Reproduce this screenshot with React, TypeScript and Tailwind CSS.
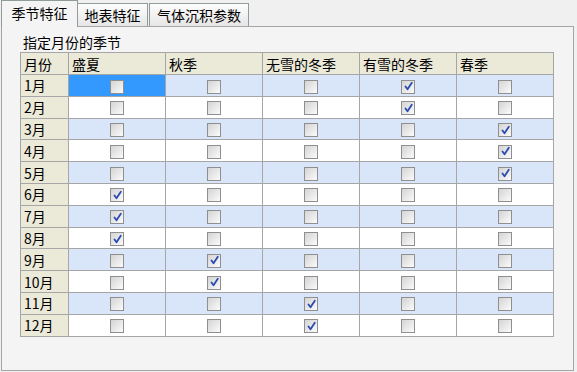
import React from 'react';

const seasons = ['盛夏', '秋季', '无雪的冬季', '有雪的冬季', '春季'];

// index of the checked season for each month
const checked = [3, 3, 4, 4, 4, 0, 0, 0, 1, 1, 2, 2];

const font = { fontFamily: '"Noto Sans CJK SC", "Noto Sans", sans-serif' };

function CheckBox({ on }: { on: boolean }) {
  return (
    <span className="inline-flex size-[14px] items-center justify-center border border-[#8f8f8f] bg-gradient-to-br from-[#d4d4d4] to-[#fbfbfb] align-middle">
      {on && (
        <svg width="11" height="11" viewBox="0 0 11 11">
          <path d="M2.5 5.5 L4.5 8.3 L8.8 1.8" fill="none" stroke="#2b4bb0" strokeWidth="1.8" strokeLinecap="round" strokeLinejoin="round" />
        </svg>
      )}
    </span>
  );
}

export default function App() {
  return (
    <div className="w-[577px] h-[372px] bg-[#f0f0f0] text-[14px] text-black" style={font}>
      <div className="flex items-end h-[26px] pl-[1px] relative z-10">
        <div className="w-[77px] border border-b-0 border-[#919b9c] bg-[#f4f4f4] flex items-center justify-center leading-none pb-[2px] -mb-[1px] h-[27px]">
          季节特征
        </div>
        <div className="h-[23px] w-[70px] border border-l-0 border-b-0 border-[#919b9c] bg-gradient-to-b from-[#fdfdfd] to-[#e6e6e6] flex items-center justify-center leading-none">
          地表特征
        </div>
        <div className="h-[23px] w-[100px] ml-[1px] border border-b-0 border-[#919b9c] bg-gradient-to-b from-[#fdfdfd] to-[#e6e6e6] flex items-center justify-center leading-none">
          气体沉积参数
        </div>
      </div>
      <div className="ml-[1px] w-[573px] h-[345px] border border-[#a5a5a5] bg-[#f4f4f4] pl-[18px] pt-[6px]">
        <div className="leading-[19px] pl-[3px]">指定月份的季节</div>
        <table className="table-fixed border-collapse w-[533px] leading-none">
          <colgroup>
            <col className="w-[48px]" />
            {seasons.map((s) => (
              <col key={s} className="w-[97px]" />
            ))}
          </colgroup>
          <thead>
            <tr className="h-[22px] bg-[#ebe9d8]">
              <th className="border border-[#a6a6a6] px-[3px] text-left font-normal">月份</th>
              {seasons.map((s) => (
                <th key={s} className="border border-[#a6a6a6] px-[3px] text-left font-normal">
                  {s}
                </th>
              ))}
            </tr>
          </thead>
          <tbody>
            {checked.map((c, i) => (
              <tr key={i} className={`h-[21.8px] ${i % 2 === 0 ? 'bg-[#d9e5f8]' : 'bg-white'}`}>
                <td className="border border-[#a6a6a6] bg-[#ebe9d8] px-[3px]">{i + 1}月</td>
                {seasons.map((s, j) => (
                  <td
                    key={s}
                    className={`border border-[#a6a6a6] text-center p-0 ${i === 0 && j === 0 ? 'bg-[#3399ff]' : ''}`}
                  >
                    <CheckBox on={c === j} />
                  </td>
                ))}
              </tr>
            ))}
          </tbody>
        </table>
      </div>
    </div>
  );
}
